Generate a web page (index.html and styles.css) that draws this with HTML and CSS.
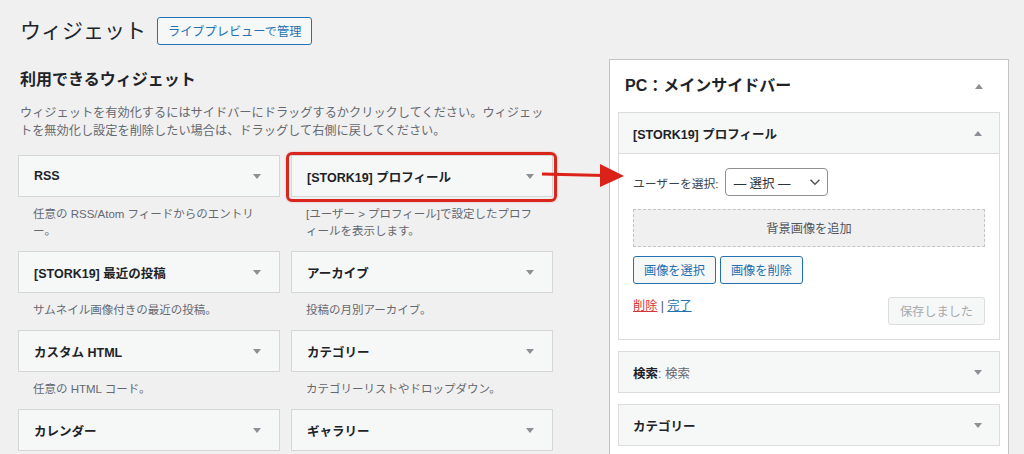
FILE: index.html
```html
<!DOCTYPE html>
<html lang="ja">
<head>
<meta charset="utf-8">
<title>ウィジェット</title>
<link rel="stylesheet" href="styles.css">
</head>
<body>
<div class="page">
  <header class="page-head">
    <h1 class="page-title">ウィジェット</h1>
    <a class="btn-outline" href="#">ライブプレビューで管理</a>
  </header>

  <div class="columns">
    <section class="available">
      <h2 class="section-title">利用できるウィジェット</h2>
      <p class="intro">ウィジェットを有効化するにはサイドバーにドラッグするかクリックしてください。ウィジェッ<br>トを無効化し設定を削除したい場合は、ドラッグして右側に戻してください。</p>

      <div class="widget-grid">
        <div class="widget">
          <div class="widget-top"><span class="widget-title">RSS</span><span class="tri-down"></span></div>
          <p class="widget-desc">任意の RSS/Atom フィードからのエントリ<br>ー。</p>
        </div>
        <div class="widget">
          <div class="widget-top highlighted"><span class="widget-title">[STORK19] プロフィール</span><span class="tri-down"></span><span class="highlight-ring"></span></div>
          <p class="widget-desc">[ユーザー &gt; プロフィール]で設定したプロフ<br>ィールを表示します。</p>
        </div>
        <div class="widget">
          <div class="widget-top"><span class="widget-title">[STORK19] 最近の投稿</span><span class="tri-down"></span></div>
          <p class="widget-desc">サムネイル画像付きの最近の投稿。</p>
        </div>
        <div class="widget">
          <div class="widget-top"><span class="widget-title">アーカイブ</span><span class="tri-down"></span></div>
          <p class="widget-desc">投稿の月別アーカイブ。</p>
        </div>
        <div class="widget">
          <div class="widget-top"><span class="widget-title">カスタム HTML</span><span class="tri-down"></span></div>
          <p class="widget-desc">任意の HTML コード。</p>
        </div>
        <div class="widget">
          <div class="widget-top"><span class="widget-title">カテゴリー</span><span class="tri-down"></span></div>
          <p class="widget-desc">カテゴリーリストやドロップダウン。</p>
        </div>
        <div class="widget">
          <div class="widget-top"><span class="widget-title">カレンダー</span><span class="tri-down"></span></div>
        </div>
        <div class="widget">
          <div class="widget-top"><span class="widget-title">ギャラリー</span><span class="tri-down"></span></div>
        </div>
      </div>
    </section>

    <aside class="sidebar">
      <div class="sidebar-head">
        <h2 class="sidebar-title">PC：メインサイドバー</h2>
        <span class="tri-up"></span>
      </div>

      <div class="sb-widget open">
        <div class="sb-widget-top">
          <span class="widget-title">[STORK19] プロフィール</span>
          <span class="tri-up"></span>
        </div>
        <div class="sb-widget-body">
          <div class="field-row">
            <label class="field-label">ユーザーを選択:</label>
            <div class="select">
              <span>— 選択 —</span>
              <svg class="chev" width="12" height="8" viewBox="0 0 12 8"><path d="M1.5 1.8 L6 6.2 L10.5 1.8" fill="none" stroke="#50575e" stroke-width="1.5"/></svg>
            </div>
          </div>
          <div class="image-drop">背景画像を追加</div>
          <div class="btn-row">
            <a class="btn-outline small" href="#">画像を選択</a>
            <a class="btn-outline small" href="#">画像を削除</a>
          </div>
          <div class="actions">
            <div class="links"><a class="link-delete" href="#">削除</a><span class="sep"> | </span><a class="link-done" href="#">完了</a></div>
            <span class="btn-disabled">保存しました</span>
          </div>
        </div>
      </div>

      <div class="sb-widget">
        <div class="sb-widget-top">
          <span class="widget-title">検索<span class="in-title">: 検索</span></span>
          <span class="tri-down"></span>
        </div>
      </div>

      <div class="sb-widget">
        <div class="sb-widget-top">
          <span class="widget-title">カテゴリー</span>
          <span class="tri-down"></span>
        </div>
      </div>
    </aside>
  </div>

  <svg class="callout-arrow" width="90" height="30" viewBox="0 0 90 30">
    <path d="M2 14 L64 15.5" stroke="#dc2119" stroke-width="3" fill="none"/>
    <polygon points="60,4 84,16 60,27" fill="#dc2119"/>
  </svg>
</div>
</body>
</html>
```

FILE: styles.css
```css
* { box-sizing: border-box; }

html, body {
  margin: 0;
  padding: 0;
  background: #f0f0f1;
}

body {
  font-family: "Liberation Sans", "Noto Sans CJK JP", sans-serif;
  color: #1d2327;
  font-size: 12.2px;
  width: 1024px;
  height: 454px;
  overflow: hidden;
}

.page {
  position: relative;
}

a { text-decoration: none; }

.page-head {
  display: flex;
  align-items: center;
  gap: 11px;
  padding: 17px 0 0 20px;
  height: 45px;
}

.page-title {
  margin: 0;
  font-size: 21px;
  font-weight: 400;
  line-height: 28px;
  color: #1d2327;
}

.btn-outline {
  display: inline-flex;
  align-items: center;
  height: 28px;
  padding: 0 10px;
  border: 1px solid #2271b1;
  border-radius: 3px;
  background: #f6f7f7;
  color: #2271b1;
  font-size: 12.2px;
  white-space: nowrap;
}

.columns {
  display: flex;
  gap: 56px;
  margin-top: 14px;
  padding-left: 18px;
}

.available {
  width: 535px;
  flex: none;
}

.section-title {
  margin: 9px 0 0;
  padding-left: 2px;
  font-size: 16px;
  font-weight: 700;
  line-height: 24px;
}

.intro {
  margin: 12px 0 15px;
  padding-left: 2px;
  font-size: 12.2px;
  line-height: 18px;
  color: #646970;
  white-space: nowrap;
}

.widget-grid {
  display: grid;
  grid-template-columns: 262px 262px;
  column-gap: 11px;
  align-items: start;
}

.widget-top {
  position: relative;
  display: flex;
  align-items: center;
  justify-content: space-between;
  height: 42px;
  padding: 0 18px 0 15px;
  background: #f6f7f7;
  border: 1px solid #d6d6d8;
}

.widget-title {
  font-size: 12.5px;
  font-weight: 700;
  color: #1d2327;
  white-space: nowrap;
}

.in-title {
  font-weight: 400;
  color: #646970;
}

.widget-desc {
  margin: 9px 0 11px;
  padding: 0 15px;
  font-size: 11.5px;
  line-height: 17px;
  color: #646970;
  white-space: nowrap;
}

.tri-down {
  width: 0;
  height: 0;
  border-left: 4px solid transparent;
  border-right: 4px solid transparent;
  border-top: 5px solid #8c8f94;
}

.tri-up {
  width: 0;
  height: 0;
  border-left: 4px solid transparent;
  border-right: 4px solid transparent;
  border-bottom: 5px solid #8c8f94;
}

.highlight-ring {
  position: absolute;
  top: -4px;
  left: -6px;
  right: -5px;
  bottom: -6px;
  border: 3px solid #d8261d;
  border-radius: 6px;
  box-shadow: 0 0 2px rgba(216, 38, 29, 0.35);
  pointer-events: none;
}

/* sidebar */
.sidebar {
  width: 400px;
  flex: none;
  min-height: 420px;
  background: #fff;
  border: 1px solid #c3c4c7;
  padding: 0 8px;
}

.sidebar-head {
  display: flex;
  align-items: center;
  justify-content: space-between;
  height: 52px;
  padding: 0 17px 0 7px;
}

.sidebar-title {
  margin: 0;
  font-size: 16px;
  font-weight: 700;
  line-height: 24px;
}

.sb-widget + .sb-widget {
  margin-top: 11px;
}

.sb-widget-top {
  display: flex;
  align-items: center;
  justify-content: space-between;
  height: 42px;
  padding: 0 17px 0 14px;
  background: #f6f7f7;
  border: 1px solid #dcdcde;
}

.sb-widget-body {
  border: 1px solid #dcdcde;
  border-top: 0;
  background: #fff;
  padding: 14px 14px 14px 14px;
}

.field-row {
  display: flex;
  align-items: center;
  gap: 6px;
}

.field-label {
  font-size: 11.8px;
  color: #3c434a;
}

.select {
  display: flex;
  align-items: center;
  justify-content: space-between;
  width: 103px;
  height: 28px;
  padding: 0 6px 0 8px;
  border: 1px solid #8c8f94;
  border-radius: 4px;
  background: #fff;
  font-size: 12.5px;
  color: #2c3338;
}

.image-drop {
  display: flex;
  align-items: center;
  justify-content: center;
  height: 38px;
  margin-top: 13px;
  background: #f0f0f1;
  border: 1px dashed #c3c4c7;
  color: #50575e;
  font-size: 12.2px;
}

.btn-row {
  display: flex;
  gap: 4px;
  margin-top: 9px;
}

.actions {
  display: flex;
  align-items: flex-start;
  justify-content: space-between;
  margin-top: 13px;
}

.links {
  font-size: 12.2px;
  line-height: 18px;
  color: #50575e;
}

.link-delete {
  color: #d63638;
  text-decoration: underline;
}

.link-done {
  color: #2271b1;
  text-decoration: underline;
}

.btn-disabled {
  display: inline-flex;
  align-items: center;
  height: 28px;
  padding: 0 11px;
  border: 1px solid #dcdcde;
  border-radius: 3px;
  background: #f6f7f7;
  color: #a7aaad;
  font-size: 12.2px;
}

.callout-arrow {
  position: absolute;
  left: 540px;
  top: 160px;
}
```
